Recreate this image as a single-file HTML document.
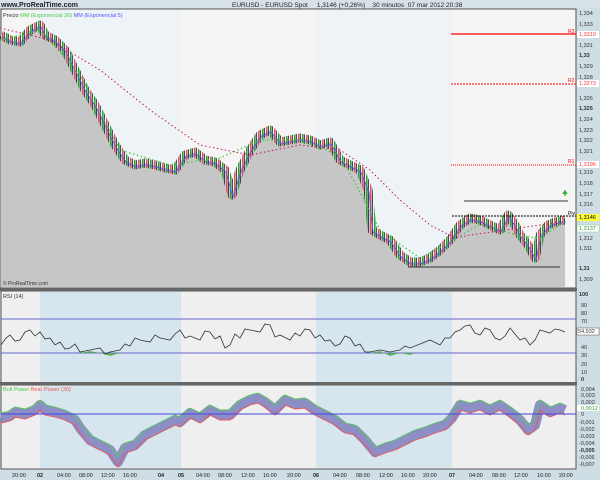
<!DOCTYPE html>
<html><head><meta charset="utf-8"><style>
body{margin:0;width:600px;height:480px;overflow:hidden;background:#cfdde5;font-family:"Liberation Sans",sans-serif}
svg{display:block}
</style></head><body>
<svg width="600" height="480" viewBox="0 0 600 480" font-family="Liberation Sans, sans-serif">
<defs>
<polyline id="pp" points="1,35 10,40 20,42 30,30 40,25 45,35 55,40 65,50 75,70 85,90 95,105 105,125 115,145 125,160 135,165 145,163 155,165 165,168 175,170 185,155 195,152 205,160 215,162 225,170 232,195 240,170 250,150 260,135 270,130 280,142 290,140 300,138 310,140 320,145 330,142 340,160 350,165 360,170 368,190 372,230 380,235 390,240 400,255 410,262 420,262 430,258 440,250 450,240 460,225 470,218 480,220 490,225 500,230 508,215 515,225 520,235 528,245 535,258 540,235 548,225 555,222 565,220"/>
<polyline id="bb" points="1,418 10,416 15,412 25,414 35,410 40,405 45,410 55,412 65,415 75,420 80,428 90,440 100,445 110,450 118,462 125,448 135,445 145,435 155,430 165,425 175,420 180,422 190,413 200,418 210,410 220,415 230,415 240,405 250,400 258,398 265,402 275,410 285,400 295,404 305,403 315,410 325,415 335,420 345,428 355,430 365,440 375,452 385,448 395,445 405,440 415,435 425,432 435,428 445,425 452,418 460,405 470,408 480,405 490,410 500,405 510,412 520,420 528,430 535,425 540,405 550,412 560,408 565,410"/>
<pattern id="cd" width="8" height="6" patternUnits="userSpaceOnUse">
<rect x="0" y="0" width="0.8" height="6" fill="#222"/>
<rect x="2" y="0" width="1.6" height="6" fill="#d85868"/>
<rect x="4" y="0" width="0.8" height="6" fill="#222"/>
<rect x="6" y="0" width="1.6" height="6" fill="#3a9a3a"/>
</pattern>
<mask id="pm"><use href="#pp" fill="none" stroke="#fff" stroke-width="9" stroke-linejoin="round"/></mask>
</defs>
<rect width="600" height="480" fill="#cfdde5"/>
<rect x="0" y="0" width="600" height="8" fill="#d6e2e8"/>
<text x="1" y="7" font-size="7" font-weight="bold" fill="#222">www.ProRealTime.com</text>
<text x="232" y="7" font-size="6.5" fill="#222">EURUSD - EURUSD Spot &#160;&#160;&#160; 1,3146 (+0,26%) &#160;&#160; 30 minutos &#160;07 mar 2012 20:38</text>
<rect x="1" y="9" width="575" height="279" fill="#f5f5f5" stroke="#555"/>
<rect x="40" y="10" width="141" height="277" fill="#eef3f7"/>
<rect x="316" y="10" width="136" height="277" fill="#eef3f7"/>
<rect x="1" y="291" width="575" height="92" fill="#efefef" stroke="#555"/>
<rect x="40" y="292" width="141" height="90" fill="#d7e6ee"/>
<rect x="316" y="292" width="136" height="90" fill="#d7e6ee"/>
<rect x="1" y="385" width="575" height="84" fill="#efefef" stroke="#555"/>
<rect x="40" y="386" width="141" height="82" fill="#d7e6ee"/>
<rect x="316" y="386" width="136" height="82" fill="#d7e6ee"/>
<rect x="0" y="288" width="577" height="3" fill="#666"/>
<rect x="0" y="382" width="577" height="3" fill="#666"/>
<polygon fill="#c6c6c6" points="1,35 10,40 20,42 30,30 40,25 45,35 55,40 65,50 75,70 85,90 95,105 105,125 115,145 125,160 135,165 145,163 155,165 165,168 175,170 185,155 195,152 205,160 215,162 225,170 232,195 240,170 250,150 260,135 270,130 280,142 290,140 300,138 310,140 320,145 330,142 340,160 350,165 360,170 368,190 372,230 380,235 390,240 400,255 410,262 420,262 430,258 440,250 450,240 460,225 470,218 480,220 490,225 500,230 508,215 515,225 520,235 528,245 535,258 540,235 548,225 555,222 565,220 565,287 1,287"/>
<rect x="0" y="10" width="568" height="277" fill="url(#cd)" mask="url(#pm)"/>
<use href="#pp" fill="none" stroke="#55e" stroke-width=".8" transform="translate(1,2)"/>
<polyline fill="none" stroke="#3c3" stroke-width="1.2" stroke-dasharray="1.5 2.5" points="0,40 40,30 80,75 120,150 170,165 220,158 260,140 300,140 340,155 380,230 420,258 450,242 480,224 520,236 540,238 565,222"/>
<polyline fill="none" stroke="#c2185b" stroke-width="1" stroke-dasharray="1.5 2.5" points="0,28 50,40 100,70 150,110 200,145 250,155 300,145 340,150 370,170 400,200 430,225 455,238 470,235 520,228 560,222"/>
<line x1="451" y1="34" x2="576" y2="34" stroke="#f00" stroke-width="1.2"/>
<line x1="451" y1="84" x2="576" y2="84" stroke="#f00" stroke-dasharray="2 1"/>
<line x1="451" y1="165" x2="576" y2="165" stroke="#f00" stroke-dasharray="1 1"/>
<line x1="452" y1="216" x2="576" y2="216" stroke="#000" stroke-dasharray="2 1"/>
<line x1="464" y1="201" x2="568" y2="201" stroke="#333"/>
<line x1="408" y1="267" x2="560" y2="267" stroke="#333"/>
<text x="568" y="33" font-size="5" fill="#f00">R3</text>
<text x="568" y="82" font-size="5" fill="#f00">R2</text>
<text x="568" y="163" font-size="5" fill="#f00">R1</text>
<text x="568" y="215" font-size="5" fill="#000">Piv</text>
<path d="M565,196 l0,-4 m-2,2 l2,-3 2,3" stroke="#3a3" stroke-width="1.4" fill="none"/>
<text x="3" y="17" font-size="5.5"><tspan fill="#333">Precio</tspan><tspan fill="#4c4"> MM (Exponencial 26)</tspan><tspan fill="#55f"> MM (Exponencial 5)</tspan></text>
<text x="3" y="285" font-size="5" fill="#333">© ProRealTime.com</text>
<g font-size="5.5" fill="#333">
<text x="579" y="15">1,334</text><text x="579" y="26">1,333</text>
<rect x="577" y="31" width="22" height="7" fill="#fff"/><text x="579" y="36" fill="#f33">1,3319</text>
<text x="579" y="47">1,331</text><text x="579" y="57" font-weight="bold">1,33</text>
<text x="579" y="68">1,329</text><text x="579" y="79">1,328</text>
<rect x="577" y="80" width="22" height="7" fill="#fff"/><text x="579" y="85" fill="#f33">1,3273</text>
<text x="579" y="100">1,326</text><text x="579" y="110" font-weight="bold">1,325</text>
<text x="579" y="121">1,324</text><text x="579" y="132">1,323</text><text x="579" y="142">1,322</text><text x="579" y="153">1,321</text>
<rect x="577" y="161" width="22" height="7" fill="#fff"/><text x="579" y="166" fill="#f33">1,3196</text>
<text x="579" y="174">1,319</text><text x="579" y="185">1,318</text><text x="579" y="196">1,317</text><text x="579" y="206">1,316</text>
<rect x="577" y="214" width="22" height="7" fill="#ff3"/><text x="579" y="219" fill="#000">1,3146</text>
<rect x="577" y="225" width="22" height="7" fill="#fff" stroke="#8c8" stroke-width=".5"/><text x="579" y="230" fill="#393">1,3137</text>
<text x="579" y="240">1,312</text><text x="579" y="250">1,311</text>
<text x="579" y="270" font-weight="bold">1,31</text><text x="579" y="281">1,309</text>
</g>
<text x="3" y="298" font-size="5.5" fill="#333">RSI (14)</text>
<line x1="1" y1="319" x2="576" y2="319" stroke="#66c"/>
<line x1="1" y1="353" x2="576" y2="353" stroke="#66c"/>
<polygon fill="#4a4" fill-opacity=".8" points="80,353 90,351 100,353 110,356 120,353"/>
<polygon fill="#4a4" fill-opacity=".8" points="370,353 380,351 390,356 400,353 410,355 415,353"/>
<polyline fill="none" stroke="#333" stroke-width=".8" points="1,345 6,338 10,335 15,341 20,340 25,332 30,330 35,336 40,332 45,339 50,338 55,345 60,342 65,349 70,348 75,344 80,352 90,350 100,348 105,354 110,352 120,350 125,344 130,346 135,338 140,340 150,342 155,335 160,338 170,340 175,334 180,330 185,338 190,336 200,340 205,331 210,332 215,339 220,336 225,348 230,345 235,334 240,338 245,329 250,330 260,332 265,324 270,325 275,337 280,335 290,340 295,333 300,336 305,329 310,330 315,338 320,335 325,341 330,340 335,346 340,344 345,336 350,338 355,346 360,344 365,352 370,352 380,350 390,352 400,350 405,346 410,348 420,344 430,340 440,345 445,338 450,338 455,332 460,330 465,326 470,325 475,333 480,335 485,328 490,330 495,338 500,340 505,336 510,328 515,334 520,340 525,338 530,345 535,340 540,330 550,333 555,329 560,330 565,332"/>
<g font-size="5.5" fill="#333"><text x="579" y="296" font-weight="bold">100</text><text x="581" y="307">90</text><text x="581" y="315">80</text><text x="581" y="323">70</text><text x="581" y="332">60</text><text x="581" y="349">40</text><text x="581" y="357">30</text><text x="581" y="366">20</text><text x="581" y="374">10</text><text x="581" y="381" font-weight="bold">0</text>
<rect x="577" y="328" width="22" height="7" fill="#fff" stroke="#555" stroke-width=".5"/><text x="578" y="333">54,932</text></g>
<text x="3" y="391" font-size="5.5"><tspan fill="#4c4">Bull Power</tspan><tspan fill="#e55"> Bear Power (30)</tspan></text>
<use href="#bb" fill="none" stroke="#8d8ec6" stroke-width="10" stroke-linejoin="round"/>
<use href="#bb" fill="none" stroke="#5c5" stroke-width=".9" transform="translate(0,-5)"/>
<use href="#bb" fill="none" stroke="#e55" stroke-width=".9" transform="translate(0,5)"/>
<line x1="1" y1="414" x2="576" y2="414" stroke="#44d" stroke-width="1"/>
<g font-size="5.5" fill="#333"><text x="581" y="391">0,004</text><text x="581" y="397">0,003</text><text x="581" y="404">0,002</text>
<rect x="577" y="405" width="22" height="6" fill="#fff"/><text x="581" y="410" fill="#393">0,0012</text><text x="581" y="416">0</text>
<text x="579" y="424">-0,001</text><text x="579" y="431">-0,002</text><text x="579" y="438">-0,003</text><text x="579" y="445">-0,004</text><text x="579" y="452" font-weight="bold">-0,005</text><text x="579" y="459">-0,006</text><text x="579" y="466">-0,007</text></g>
<g font-size="5.5" fill="#222">
<text x="12" y="477">20:00</text><text x="37" y="477" font-weight="bold">02</text><text x="57" y="477">04:00</text><text x="79" y="477">08:00</text><text x="101" y="477">12:00</text><text x="123" y="477">16:00</text><text x="158" y="477" font-weight="bold">04</text><text x="178" y="477" font-weight="bold">05</text>
<text x="196" y="477">04:00</text><text x="218" y="477">08:00</text><text x="241" y="477">12:00</text><text x="263" y="477">16:00</text><text x="287" y="477">20:00</text><text x="313" y="477" font-weight="bold">06</text>
<text x="333" y="477">04:00</text><text x="356" y="477">08:00</text><text x="379" y="477">12:00</text><text x="401" y="477">16:00</text><text x="423" y="477">20:00</text><text x="449" y="477" font-weight="bold">07</text>
<text x="469" y="477">04:00</text><text x="492" y="477">08:00</text><text x="514" y="477">12:00</text><text x="537" y="477">16:00</text><text x="559" y="477">20:00</text></g>
</svg>
</body></html>
